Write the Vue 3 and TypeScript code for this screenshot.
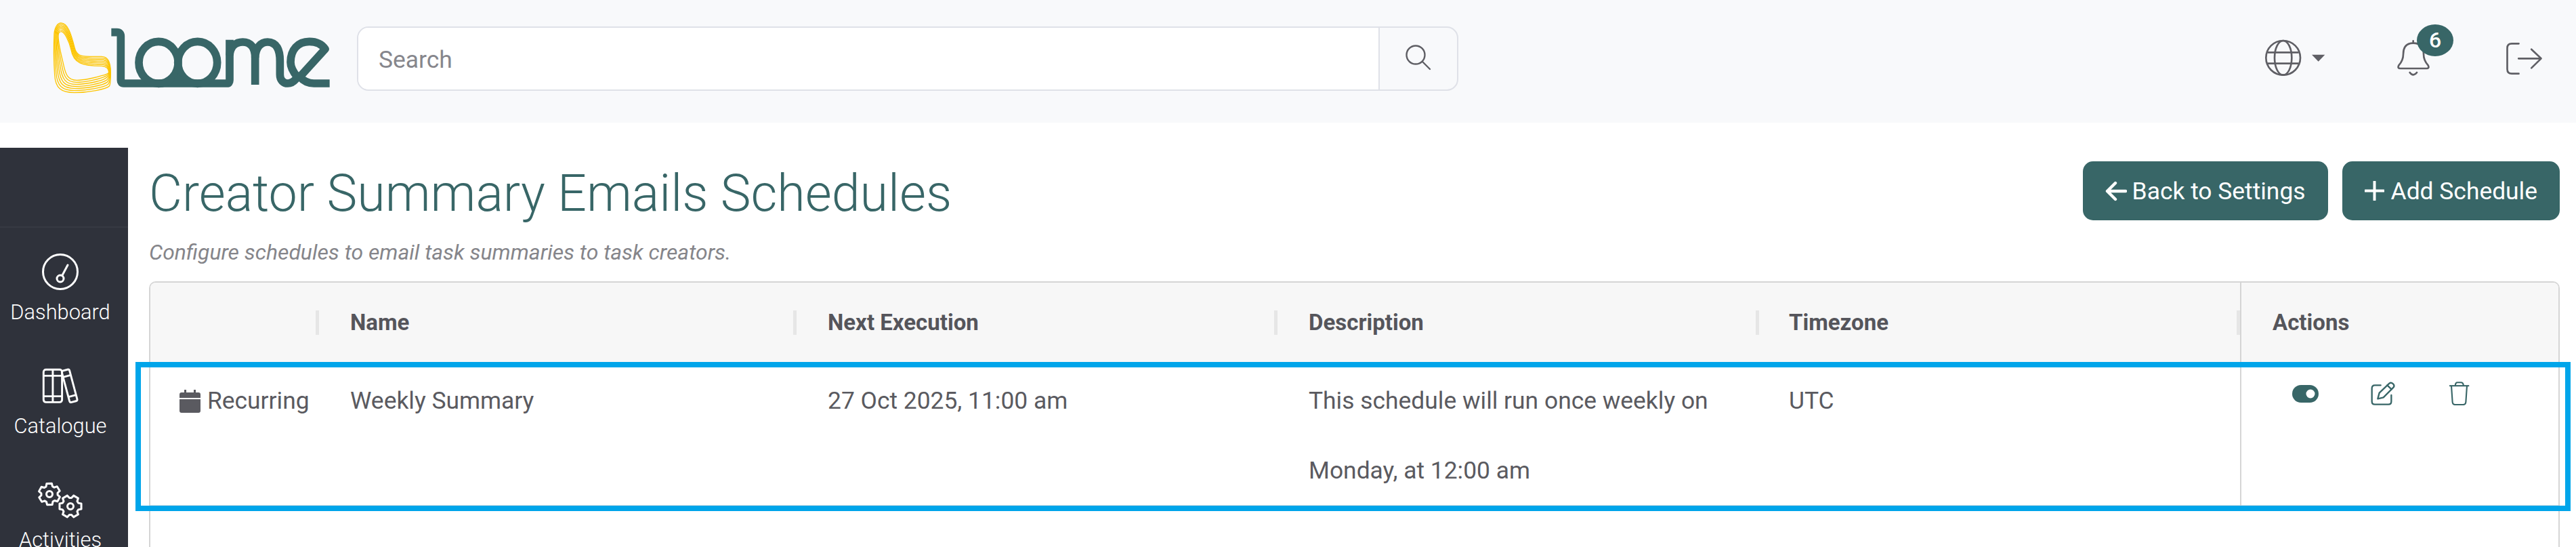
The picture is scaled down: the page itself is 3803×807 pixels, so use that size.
<script setup lang="ts">
import { computed } from 'vue'

type Seg = number[]
const outer: Seg[] = [
  [120, 72],
  [150, 72, 165, 120, 180, 180],
  [190, 225, 215, 220, 300, 220],
  [330, 220, 340, 250, 340, 290],
  [340, 320, 340, 340, 335, 350],
  [320, 365, 240, 380, 180, 380],
  [120, 380, 95, 360, 92, 300],
  [88, 240, 88, 160, 90, 120],
  [92, 90, 105, 72, 120, 72],
]
const inner: Seg[] = [
  [120, 110],
  [135, 108, 155, 150, 165, 190],
  [175, 250, 215, 262, 300, 262],
  [320, 262, 332, 275, 332, 290],
  [330, 295, 320, 300, 300, 305],
  [270, 315, 220, 325, 190, 325],
  [150, 325, 140, 300, 130, 250],
  [120, 210, 108, 160, 108, 130],
  [108, 118, 112, 110, 120, 110],
]
const ribbon = computed(() => {
  const lines: string[] = []
  const n = 7
  for (let i = 0; i < n; i++) {
    const t = i / (n - 1)
    const mix = (a: number, b: number) => (a + (b - a) * t).toFixed(1)
    const parts = outer.map((seg, s) => {
      const pts = seg.map((v, k) => mix(v, inner[s][k]))
      return (s === 0 ? 'M' : 'C') + pts.join(' ')
    })
    lines.push(parts.join(' ') + 'Z')
  }
  return lines
})

function gear(cx: number, cy: number, R: number, rot: number): string {
  const teeth = 6
  const r = R * 0.76
  const pts: string[] = []
  for (let i = 0; i < teeth; i++) {
    const a = rot + (i * Math.PI * 2) / teeth
    const w = 0.3
    const g = 0.4
    const list: [number, number][] = [
      [r, a - g],
      [R, a - w * 0.8],
      [R, a + w * 0.8],
      [r, a + g],
    ]
    for (const [rad, ang] of list) {
      pts.push(`${(cx + rad * Math.cos(ang)).toFixed(2)} ${(cy + rad * Math.sin(ang)).toFixed(2)}`)
    }
  }
  return 'M' + pts.join(' L') + 'Z'
}
const gearA = gear(19, 19, 16, 0.5)
const gearB = gear(50, 37, 16.5, 0)

const columns = ['', 'Name', 'Next Execution', 'Description', 'Timezone']
</script>

<template>
  <div class="page">
    <header class="top">
      <svg class="logo" viewBox="0 0 1380 420" aria-label="Loome">
        <g fill="none" stroke="#fdc500" stroke-width="4">
          <path v-for="(d, i) in ribbon" :key="i" :d="d" />
        </g>
        <g fill="none" stroke="#386667" stroke-width="35" stroke-linejoin="round">
          <path d="M343 113H368Q385 113 385 130V325Q385 339 398 339H855Q867 339 867 325V146" />
          <ellipse cx="552" cy="247" rx="87" ry="93" />
          <ellipse cx="725" cy="247" rx="87" ry="93" />
          <path d="M867 215C870 175 895 156 925 156C960 156 980 180 980 225V345" />
          <path d="M980 225C982 180 1005 156 1035 156C1075 156 1090 190 1090 240V300C1090 325 1105 339 1125 339C1150 339 1158 320 1168 312" />
          <path d="M1168 312C1145 285 1137 265 1137 245C1137 190 1170 154 1220 154C1250 154 1275 165 1290 187L1178 310C1195 330 1215 339 1240 339H1310" />
        </g>
        <path d="M615 325H665L640 295Z" fill="#386667" />
      </svg>
      <div class="search">
        <div class="search-field">Search</div>
        <div class="search-btn">
          <svg class="search-icon" viewBox="0 0 40 40">
            <circle cx="15" cy="15" r="13.5" fill="none" stroke="#5f5f65" stroke-width="2.4" />
            <path d="M25 25L36 36" stroke="#5f5f65" stroke-width="2.4" stroke-linecap="round" />
          </svg>
        </div>
      </div>
      <div class="tools">
        <svg class="globe" viewBox="40 85 270 168">
          <g fill="none" stroke="#5f5f65" stroke-width="8">
            <circle cx="123" cy="167" r="76" />
            <ellipse cx="123" cy="167" rx="38" ry="76" />
            <path d="M54 143H192M54 192H192" />
          </g>
          <path d="M250 153H308L279 183Z" fill="#5f5f65" />
        </svg>
        <div class="bell-wrap">
          <svg class="bell" viewBox="625 85 150 165">
            <g fill="none" stroke="#5f5f65" stroke-width="8" stroke-linecap="round" stroke-linejoin="round">
              <path d="M642 214H758Q772 214 765 200Q745 178 745 150Q745 102 699 102Q655 102 655 150Q655 178 635 200Q628 214 642 214Z" />
              <path d="M699 92V100M684 232Q699 252 715 232" />
            </g>
          </svg>
          <span class="badge">6</span>
        </div>
        <svg class="logout" viewBox="1105 95 170 150">
          <g fill="none" stroke="#5f5f65" stroke-width="8" stroke-linecap="round" stroke-linejoin="round">
            <path d="M1166 102H1135Q1115 102 1115 122V215Q1115 235 1135 235H1166" />
            <path d="M1165 168H1265M1222 127L1265 168L1222 210" />
          </g>
        </svg>
      </div>
    </header>

    <div class="body">
      <aside class="side">
        <div class="side-top"></div>
        <nav class="nav">
          <a class="nav-item">
            <svg class="nav-icon" viewBox="0 0 54 54">
              <g fill="none" stroke="#fff" stroke-width="3" stroke-linecap="round">
                <circle cx="27" cy="27" r="25.5" />
                <circle cx="27" cy="37" r="5" />
                <path d="M30 32L38 17" />
              </g>
            </svg>
            <span>Dashboard</span>
          </a>
          <a class="nav-item">
            <svg class="nav-icon" viewBox="62 34 172 166">
              <g fill="none" stroke="#fff" stroke-width="9" stroke-linejoin="round">
                <rect x="72" y="44" width="84" height="148" rx="11" />
                <path d="M114 44V192M72 72H156M72 165H156" />
                <g transform="rotate(-15 190 118)">
                  <rect x="172" y="44" width="36" height="148" rx="8" />
                  <path d="M172 72H208M172 165H208" />
                </g>
              </g>
            </svg>
            <span>Catalogue</span>
          </a>
          <a class="nav-item">
            <svg class="nav-icon gears" viewBox="0 0 70 55">
              <g fill="none" stroke="#fff" stroke-width="3" stroke-linejoin="round">
                <path :d="gearA" />
                <circle cx="19" cy="19" r="4.5" />
                <path :d="gearB" />
                <circle cx="50" cy="37" r="4.5" />
              </g>
            </svg>
            <span>Activities</span>
          </a>
        </nav>
      </aside>

      <main class="main">
        <div class="head">
          <div class="titles">
            <h1 class="title">Creator Summary Emails Schedules</h1>
            <p class="sub">Configure schedules to email task summaries to task creators.</p>
          </div>
          <div class="btns">
            <button class="btn back">
              <svg class="btn-icon" viewBox="0 0 32 30">
                <path d="M15 3L3 15L15 27M3 15H30" fill="none" stroke="#fff" stroke-width="4.4" stroke-linecap="round" stroke-linejoin="round" />
              </svg>
              Back to Settings
            </button>
            <button class="btn add">
              <svg class="btn-icon" viewBox="0 0 29 29">
                <path d="M14.5 1V28M1 14.5H28" fill="none" stroke="#fff" stroke-width="4" stroke-linecap="round" />
              </svg>
              Add Schedule
            </button>
          </div>
        </div>

        <section class="table">
          <div class="thead">
            <div v-for="(c, i) in columns" :key="i" class="th sep">{{ c }}</div>
            <div class="th last">Actions</div>
          </div>
          <div class="tr">
            <div class="td first">
              <svg class="cal" viewBox="0 0 31 34">
                <path d="M7 0h3v4H21V0h3v4h4a3 3 0 0 1 3 3v5H0V7a3 3 0 0 1 3-3h4zM0 14H31V31a3 3 0 0 1-3 3H3a3 3 0 0 1-3-3z" fill="#5a5a60" />
              </svg>
              <span>Recurring</span>
            </div>
            <div class="td">Weekly Summary</div>
            <div class="td">27 Oct 2025, 11:00 am</div>
            <div class="td">This schedule will run once weekly on Monday, at 12:00 am</div>
            <div class="td tz">UTC</div>
            <div class="td last acts">
              <div class="act-row">
                <svg class="toggle" viewBox="0 0 39 26">
                  <rect width="39" height="26" rx="13" fill="#386667" />
                  <circle cx="27" cy="13" r="6.5" fill="#fff" />
                </svg>
                <svg class="edit" viewBox="388 40 108 105">
                  <g fill="none" stroke="#386667" stroke-width="7" stroke-linejoin="round" stroke-linecap="round">
                    <path d="M432 56H406Q393 56 393 70V128Q393 141 406 141H466Q479 141 479 128V100" />
                    <path d="M419 116L426 90L470 48Q478 42 487 50Q495 58 488 66L444 110Z" />
                    <path d="M461 56L480 74" />
                  </g>
                </svg>
                <svg class="trash" viewBox="735 38 95 108">
                  <g fill="none" stroke="#386667" stroke-width="6.5" stroke-linejoin="round">
                    <path d="M738 57H828" />
                    <path d="M765 57Q765 42 775 42H790Q802 42 802 57" />
                    <path d="M747 57L752 130Q753 143 765 143H800Q812 143 813 130L818 57" />
                  </g>
                </svg>
              </div>
            </div>
          </div>
        </section>
      </main>
    </div>
  </div>
</template>

<style>
html, body { margin: 0; padding: 0; background: #fff; overflow: hidden; }
</style>

<style scoped>
.page {
  width: 3803px;
  height: 807px;
  overflow: hidden;
  font-family: Roboto, "Liberation Sans", sans-serif;
  font-size: 35.4px;
  color: #5a5a60;
  background: #fff;
}
.top {
  height: 181px;
  background: #f8f9fb;
  display: flex;
  align-items: flex-start;
  padding-left: 50px;
  box-sizing: border-box;
}
.logo { width: 460px; height: 140px; margin-top: 10px; flex: none; }
.search {
  margin: 39px 0 0 17px;
  width: 1626px;
  height: 95px;
  box-sizing: border-box;
  border: 2px solid #dfe1e8;
  border-radius: 17px;
  display: flex;
  overflow: hidden;
}
.search-field {
  flex: 1;
  background: #fff;
  color: #86868c;
  padding-left: 30px;
  line-height: 95px;
  border-right: 2px solid #dfe1e8;
}
.search-btn {
  width: 114px;
  flex: none;
  display: flex;
  align-items: center;
  justify-content: center;
}
.search-icon { width: 40px; height: 40px; margin: -2px 0 0 1px; }
.tools {
  margin-left: auto;
  padding: 58px 48px 0 0;
  display: flex;
  align-items: flex-start;
}
.globe { width: 90px; height: 56px; }
.bell-wrap { position: relative; margin-left: 105px; width: 50px; height: 55px; }
.bell { width: 50px; height: 55px; display: block; }
.badge {
  position: absolute;
  left: 30px;
  top: -22px;
  width: 54px;
  height: 47px;
  border-radius: 50%;
  background: #386667;
  color: #fff;
  font-size: 32px;
  font-weight: 500;
  line-height: 47px;
  text-align: center;
}
.logout { width: 57px; height: 50px; margin: 4px 0 0 110px; }

.body { display: flex; margin-top: 37px; height: 589px; }
.side { width: 189px; flex: none; background: #2f323b; color: #fff; }
.side-top { height: 116px; border-bottom: 2px solid #363942; box-sizing: content-box; }
.nav { display: flex; flex-direction: column; gap: 61px; padding: 38px 11px 0 0; }
.nav-item {
  display: flex;
  flex-direction: column;
  align-items: center;
  font-size: 30.8px;
  font-weight: 300;
  line-height: 40px;
  white-space: nowrap;
}
.nav-icon { width: 56px; height: 54px; margin-bottom: 13px; }
.gears { width: 70px; height: 55px; margin-bottom: 12px; }

.main { flex: 1; padding: 20px 24px 0 31px; min-width: 0; }
.head { display: flex; justify-content: space-between; align-items: flex-start; }
.title {
  margin: 1px 0 0;
  color: #386667;
  font-size: 75.4px;
  font-weight: 300;
  line-height: 92px;
}
.sub {
  margin: 21px 0 23px;
  color: #85858a;
  font-size: 31.9px;
  font-style: italic;
  line-height: 40px;
}
.btns { display: flex; gap: 21px; }
.btn {
  height: 87px;
  border: 0;
  border-radius: 15px;
  background: #386667;
  color: #fff;
  font: inherit;
  display: flex;
  align-items: center;
  padding: 0 33px;
}
.btn-icon { width: 29px; height: 29px; margin-right: 10px; flex: none; }
.back .btn-icon { width: 32px; height: 30px; margin-right: 8px; }

.table {
  border: 2px solid #d5d5d5;
  border-bottom: 0;
  border-radius: 10px 10px 0 0;
  height: 500px;
}
.thead, .tr {
  display: grid;
  grid-template-columns: 249px 705px 710px 711px 710px 1fr;
}
.thead { height: 118px; background: #f7f7f7; border-radius: 8px 8px 0 0; }
.th {
  position: relative;
  padding-left: 46px;
  line-height: 118px;
  font-size: 33px;
  font-weight: 700;
  color: #55555b;
}
.th:nth-child(5) { padding-left: 44px; }
.sep::after {
  content: "";
  position: absolute;
  right: 0;
  top: 41px;
  width: 5px;
  height: 36px;
  background: #e6e6e6;
}
.last { border-left: 2px solid #d5d5d5; }
.tr {
  position: relative;
  height: 212px;
  box-sizing: border-box;
  border-bottom: 2px solid #dee2e6;
}
.tr::after {
  content: "";
  position: absolute;
  left: -22px;
  right: -18px;
  top: -1px;
  bottom: -9px;
  border: 8px solid #00a5ea;
  pointer-events: none;
}
.td {
  padding: 5px 40px 0 46px;
  line-height: 103px;
}
.tz { padding-left: 44px; }
.first {
  padding-left: 43px;
  padding-right: 0;
  white-space: nowrap;
  display: flex;
  align-items: flex-start;
}
.cal { width: 31px; height: 34px; margin: 35px 10px 0 0; flex: none; }
.acts { padding: 28px 0 0 75px; }
.act-row { display: flex; align-items: center; height: 35px; }
.toggle { width: 39px; height: 26px; }
.edit { width: 36px; height: 35px; margin-left: 77px; }
.trash { width: 31px; height: 35px; margin-left: 79px; }
</style>
